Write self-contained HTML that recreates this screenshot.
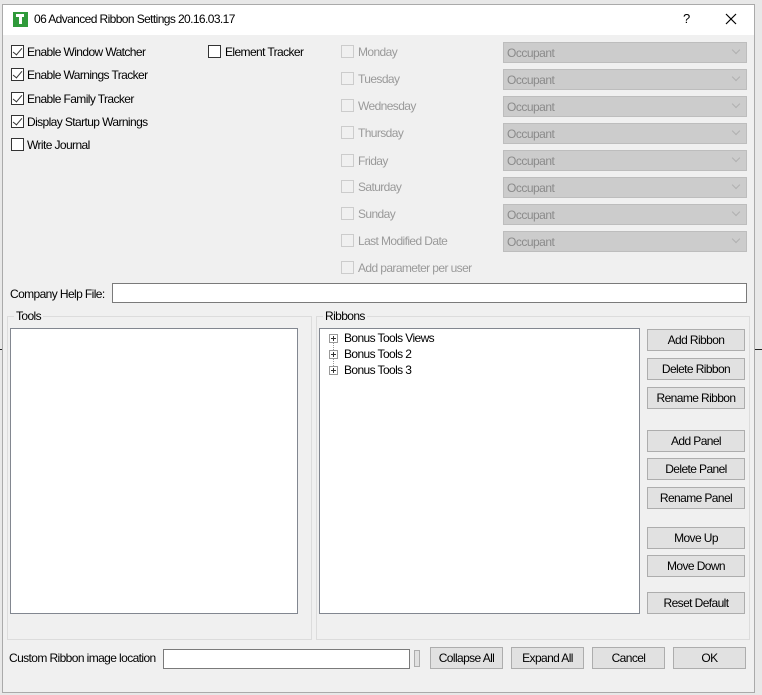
<!DOCTYPE html>
<html><head><style>
*{box-sizing:border-box;margin:0;padding:0}
body{width:762px;height:695px;background:#e8e8e8;position:relative;overflow:hidden;font-family:"Liberation Sans",sans-serif;font-size:12px;color:#000}
.a{position:absolute}
.win{left:2px;top:4px;width:753px;height:689px;background:#f0f0f0;border:1px solid #aaa}
.title{left:3px;top:5px;width:751px;height:30px;background:#fff}
.cb{position:absolute;width:13px;height:13px;border:1px solid #333;background:#fff}
.cb.d{border-color:#ccc;background:#f0f0f0}
.lbl{position:absolute;white-space:nowrap;letter-spacing:-0.6px}
.dis{color:#9a9a9a}
.dd{position:absolute;left:503px;width:244px;height:21px;background:#ccc;border:1px solid #bdbdbd;color:#8a8a8a;padding:3px 0 0 3px;letter-spacing:-0.5px}
.dd:after{content:"";position:absolute;right:7px;top:4px;width:5px;height:5px;border-right:1px solid #b0b0b0;border-bottom:1px solid #b0b0b0;transform:rotate(45deg)}
.btn{position:absolute;height:22px;background:#e1e1e1;border:1px solid #adadad;text-align:center;line-height:20px;letter-spacing:-0.6px}
.tb{position:absolute;background:#fff;border:1px solid #7a7a7a}
.grp{position:absolute;border:1px solid #dcdcdc}
.pl{display:inline-block;width:9px;height:9px;border:1px solid #999;position:relative;vertical-align:-1px;margin-right:6px;background:#fff}
.pl:before{content:"";position:absolute;left:1px;top:3px;width:5px;height:1px;background:#333}
.pl:after{content:"";position:absolute;left:3px;top:1px;width:1px;height:5px;background:#333}
.chk:after{content:"";position:absolute;left:3px;top:0px;width:4px;height:8px;border-right:1px solid #333;border-bottom:1px solid #333;transform:rotate(40deg)}
</style></head><body>
<div class="a" style="left:0;top:349px;width:4px;height:1px;background:#222"></div>
<div class="a" style="left:755px;top:349px;width:7px;height:1px;background:#222"></div>
<div class="a win"></div>
<div class="a title"></div>
<div class="a" style="left:13px;top:12px;width:15px;height:15px;background:#2f9a3a"></div>
<div class="a" style="left:16px;top:14px;width:8px;height:3px;background:#fff"></div>
<div class="a" style="left:19px;top:14px;width:3px;height:10px;background:#fff"></div>
<div class="lbl" style="left:34px;top:12px">06 Advanced Ribbon Settings 20.16.03.17</div>
<div class="lbl" style="left:683px;top:11px;font-size:13px">?</div>
<svg class="a" style="left:725px;top:13px" width="12" height="12"><path d="M1 1L11 11M11 1L1 11" stroke="#000" stroke-width="1.2"/></svg>

<div class="cb chk" style="left:11px;top:45px"></div><div class="lbl" style="left:27px;top:45px">Enable Window Watcher</div>
<div class="cb chk" style="left:11px;top:68px"></div><div class="lbl" style="left:27px;top:68px">Enable Warnings Tracker</div>
<div class="cb chk" style="left:11px;top:92px"></div><div class="lbl" style="left:27px;top:92px">Enable Family Tracker</div>
<div class="cb chk" style="left:11px;top:115px"></div><div class="lbl" style="left:27px;top:115px">Display Startup Warnings</div>
<div class="cb" style="left:11px;top:138px"></div><div class="lbl" style="left:27px;top:138px">Write Journal</div>
<div class="cb" style="left:208px;top:45px"></div><div class="lbl" style="left:225px;top:45px">Element Tracker</div>

<div class="cb d" style="left:341px;top:45px"></div><div class="lbl dis" style="left:358px;top:45px">Monday</div><div class="dd" style="top:42px">Occupant</div>
<div class="cb d" style="left:341px;top:72px"></div><div class="lbl dis" style="left:358px;top:72px">Tuesday</div><div class="dd" style="top:69px">Occupant</div>
<div class="cb d" style="left:341px;top:99px"></div><div class="lbl dis" style="left:358px;top:99px">Wednesday</div><div class="dd" style="top:96px">Occupant</div>
<div class="cb d" style="left:341px;top:126px"></div><div class="lbl dis" style="left:358px;top:126px">Thursday</div><div class="dd" style="top:123px">Occupant</div>
<div class="cb d" style="left:341px;top:154px"></div><div class="lbl dis" style="left:358px;top:154px">Friday</div><div class="dd" style="top:150px">Occupant</div>
<div class="cb d" style="left:341px;top:180px"></div><div class="lbl dis" style="left:358px;top:180px">Saturday</div><div class="dd" style="top:177px">Occupant</div>
<div class="cb d" style="left:341px;top:207px"></div><div class="lbl dis" style="left:358px;top:207px">Sunday</div><div class="dd" style="top:204px">Occupant</div>
<div class="cb d" style="left:341px;top:234px"></div><div class="lbl dis" style="left:358px;top:234px">Last Modified Date</div><div class="dd" style="top:231px">Occupant</div>
<div class="cb d" style="left:341px;top:261px"></div><div class="lbl dis" style="left:358px;top:261px">Add parameter per user</div>

<div class="lbl" style="left:10px;top:287px">Company Help File:</div>
<div class="tb" style="left:112px;top:283px;width:635px;height:20px"></div>

<div class="grp" style="left:7px;top:316px;width:305px;height:324px"></div>
<div class="lbl" style="left:14px;top:309px;background:#f0f0f0;padding:0 2px">Tools</div>
<div class="tb" style="left:10px;top:328px;width:288px;height:286px;border-color:#828790"></div>

<div class="grp" style="left:316px;top:316px;width:434px;height:324px"></div>
<div class="lbl" style="left:323px;top:309px;background:#f0f0f0;padding:0 2px">Ribbons</div>
<div class="tb" style="left:319px;top:328px;width:321px;height:286px;border-color:#828790"></div>
<div class="a" style="left:333px;top:342px;width:0;height:30px;border-left:1px dotted #999"></div>
<div class="lbl" style="left:329px;top:331px"><span class="pl"></span>Bonus Tools Views</div>
<div class="lbl" style="left:329px;top:347px"><span class="pl"></span>Bonus Tools 2</div>
<div class="lbl" style="left:329px;top:363px"><span class="pl"></span>Bonus Tools 3</div>

<div class="btn" style="left:647px;top:329px;width:98px">Add Ribbon</div>
<div class="btn" style="left:647px;top:358px;width:98px">Delete Ribbon</div>
<div class="btn" style="left:647px;top:387px;width:98px">Rename Ribbon</div>
<div class="btn" style="left:647px;top:430px;width:98px">Add Panel</div>
<div class="btn" style="left:647px;top:458px;width:98px">Delete Panel</div>
<div class="btn" style="left:647px;top:487px;width:98px">Rename Panel</div>
<div class="btn" style="left:647px;top:527px;width:98px">Move Up</div>
<div class="btn" style="left:647px;top:555px;width:98px">Move Down</div>
<div class="btn" style="left:647px;top:592px;width:98px">Reset Default</div>

<div class="lbl" style="left:9px;top:651px">Custom Ribbon image location</div>
<div class="tb" style="left:163px;top:649px;width:247px;height:20px"></div>
<div class="a" style="left:414px;top:650px;width:6px;height:17px;background:#e1e1e1;border:1px solid #adadad"></div>
<div class="btn" style="left:430px;top:647px;width:73px">Collapse All</div>
<div class="btn" style="left:511px;top:647px;width:73px">Expand All</div>
<div class="btn" style="left:592px;top:647px;width:73px">Cancel</div>
<div class="btn" style="left:673px;top:647px;width:73px">OK</div>
</body></html>
